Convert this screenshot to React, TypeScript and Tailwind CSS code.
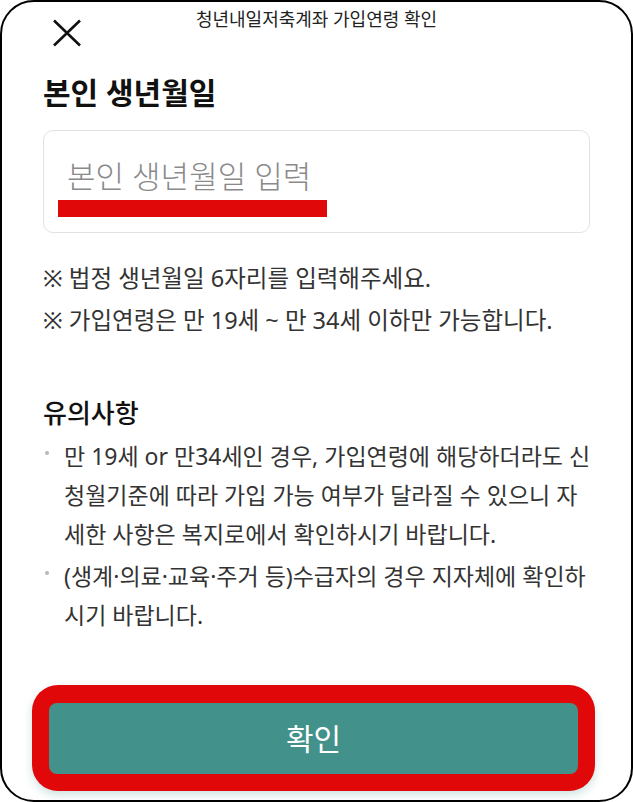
const notes = [
  '※ 법정 생년월일 6자리를 입력해주세요.',
  '※ 가입연령은 만 19세 ~ 만 34세 이하만 가능합니다.',
];

const cautions = [
  [
    '만 19세 or 만34세인 경우, 가입연령에 해당하더라도 신',
    '청월기준에 따라 가입 가능 여부가 달라질 수 있으니 자',
    '세한 사항은 복지로에서 확인하시기 바랍니다.',
  ],
  ['(생계·의료·교육·주거 등)수급자의 경우 지자체에 확인하', '시기 바랍니다.'],
];

function CloseIcon() {
  return (
    <svg width="30" height="28" viewBox="0 0 30 28" fill="none">
      <path d="M2 1.5 L28 26.5 M28 1.5 L2 26.5" stroke="#111" strokeWidth="2.6" />
    </svg>
  );
}

export default function App() {
  return (
    <div className="h-[802px] w-[633px] bg-white font-['Noto_Sans','Noto_Sans_CJK_KR',sans-serif]">
      <div className="flex h-full flex-col overflow-hidden rounded-[34px] border-2 border-black">
        {/* Header */}
        <div className="grid grid-cols-[1fr_auto_1fr] pt-[6px]">
          <div className="ml-[50px] mt-[11px]">
            <CloseIcon />
          </div>
          <div className="text-[18px] leading-[22px] text-[#222]">청년내일저축계좌 가입연령 확인</div>
          <div />
        </div>

        {/* Content */}
        <div className="px-[41px]">
          <h1 className="mt-[29px] text-[30px] font-semibold leading-[34px] text-[#111]">본인 생년월일</h1>

          <div className="mt-[20px] h-[103px] rounded-[10px] border border-[#e2e2e2] pt-[28px]">
            <div className="pl-[23px] text-[31px] font-light leading-[34px] text-[#8a8a8a]">본인 생년월일 입력</div>
            <div className="ml-[14px] mt-[7px] h-[17px] w-[269px] bg-[#e00808]" />
          </div>

          <div className="mt-[24px]">
            {notes.map((n) => (
              <p key={n} className="whitespace-nowrap text-[23.5px] leading-[42px] text-[#333]">
                {n}
              </p>
            ))}
          </div>

          <h2 className="mt-[56px] text-[26px] font-medium leading-[32px] text-[#111]">유의사항</h2>

          <ul className="mt-[8px] flex flex-col gap-[3px]">
            {cautions.map((lines, i) => (
              <li key={i} className="flex">
                <div className="w-[21px] shrink-0">
                  <div className="ml-[2px] mt-[14px] h-[4px] w-[4px] rounded-full bg-[#b8b8b8]" />
                </div>
                <div className="text-[23px] leading-[39px] text-[#333]">
                  {lines.map((l) => (
                    <div key={l} className="whitespace-nowrap">
                      {l}
                    </div>
                  ))}
                </div>
              </li>
            ))}
          </ul>
        </div>

        {/* Confirm button */}
        <div className="mb-[9px] ml-[30px] mt-auto w-[563px] rounded-[26px] bg-[#e00808] px-[17px] pb-[17px] pt-[18px] shadow-[0_4px_8px_rgba(67,145,139,0.25)]">
          <button className="flex h-[71px] w-full items-center justify-center rounded-[8px] bg-[#43918b] text-[30px] text-white">
            확인
          </button>
        </div>
      </div>
    </div>
  );
}
